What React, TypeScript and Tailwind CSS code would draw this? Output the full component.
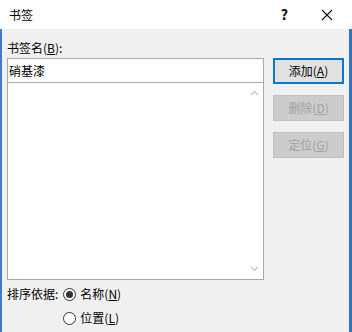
const font = { fontFamily: '"Microsoft YaHei UI", "Noto Sans CJK SC", "Noto Sans", sans-serif' };

function Radio({ checked, label, keyChar }: { checked?: boolean; label: string; keyChar: string }) {
  return (
    <div className="flex items-center gap-[4px]">
      <span className="flex h-[13px] w-[13px] items-center justify-center rounded-full border border-[#333333] bg-white">
        {checked && <span className="h-[7px] w-[7px] rounded-full bg-[#333333]" />}
      </span>
      <span>
        {label}(<span className="underline">{keyChar}</span>)
      </span>
    </div>
  );
}

function DialogButton({ label, keyChar, primary, disabled }: { label: string; keyChar: string; primary?: boolean; disabled?: boolean }) {
  return (
    <button
      className={`flex h-[26px] w-[71px] items-center justify-center text-[12px] ${
        primary
          ? "border-2 border-[#0078d7] bg-[#e1e1e1] text-black"
          : disabled
          ? "border border-[#bfbfbf] bg-[#cccccc] text-[#a0a0a0]"
          : "border border-[#adadad] bg-[#e1e1e1] text-black"
      }`}
    >
      {label}(<span className="underline">{keyChar}</span>)
    </button>
  );
}

export default function App() {
  return (
    <div className="flex h-[332px] w-[352px] flex-col overflow-hidden bg-[#f0f0f0] text-[12px] text-black" style={font}>
      <div className="flex h-[29px] shrink-0 items-center bg-white pl-[9px] pr-[15px]">
        <span className="flex-1">书签</span>
        <span className="mr-[33px] text-[14px] font-semibold">?</span>
        <svg width="12" height="12" viewBox="0 0 12 12" className="mr-[4px]">
          <path d="M1 1 L11 11 M11 1 L1 11" stroke="#111" strokeWidth="1.1" />
        </svg>
      </div>
      <div className="flex flex-1 border-l-2 border-r-[3px] border-l-[#3a7dc9] border-r-[#2f74c0]">
        <div className="ml-[5px] flex w-[257px] flex-col">
          <div className="mt-[10px] h-[17px] leading-[17px]">
            书签名(<span className="underline">B</span>):
          </div>
          <div className="mt-[2px] flex h-[25px] items-center border border-[#a8a8a8] bg-white px-[1px]">
            硝基漆
          </div>
          <div className="flex h-[197px] border border-t-0 border-[#a8a8a8] bg-white">
            <div className="flex-1" />
            <div className="flex w-[17px] flex-col items-center justify-between py-[7px]">
              <svg width="9" height="6" viewBox="0 0 9 6">
                <path d="M1 5 L4.5 1.5 L8 5" fill="none" stroke="#c2c2c2" strokeWidth="1.2" />
              </svg>
              <svg width="9" height="6" viewBox="0 0 9 6">
                <path d="M1 1 L4.5 4.5 L8 1" fill="none" stroke="#c2c2c2" strokeWidth="1.2" />
              </svg>
            </div>
          </div>
          <div className="mt-[6px] flex items-start">
            <span className="mr-[5px] leading-[16px]">排序依据:</span>
            <div className="flex flex-col gap-[8px] leading-[16px]">
              <Radio checked label="名称" keyChar="N" />
              <Radio label="位置" keyChar="L" />
            </div>
          </div>
        </div>
        <div className="ml-[9px] mt-[29px] flex flex-col gap-[11px]">
          <DialogButton label="添加" keyChar="A" primary />
          <DialogButton label="删除" keyChar="D" disabled />
          <DialogButton label="定位" keyChar="G" disabled />
        </div>
      </div>
    </div>
  );
}
